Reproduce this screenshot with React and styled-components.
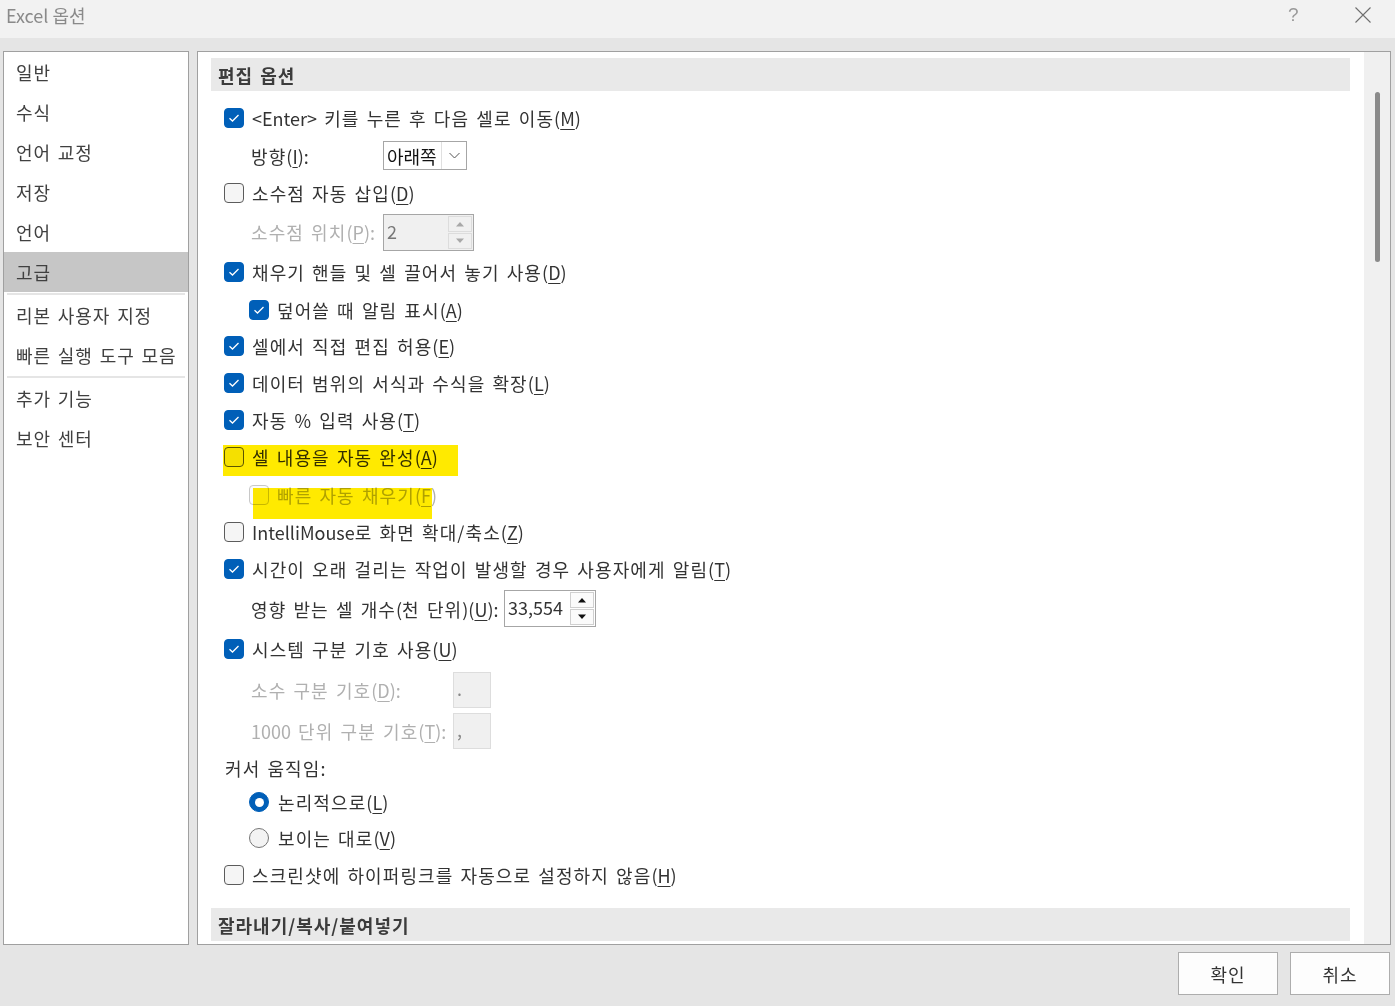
import React from "react";
import styled, { createGlobalStyle } from "styled-components";

const GlobalStyle = createGlobalStyle`
  html, body {
    margin: 0;
    padding: 0;
    background: #e5e5e5;
  }
  body {
    font-family: "Noto Sans CJK KR", "Noto Sans", sans-serif;
    color: #333;
  }
`;

const Window = styled.div`
  width: 1395px;
  height: 1006px;
  display: flex;
  flex-direction: column;
  position: relative;
  overflow: hidden;
`;

const TitleBar = styled.div`
  height: 38px;
  background: #f2f2f2;
  display: flex;
  align-items: center;
  padding: 0 0 0 6px;
  box-sizing: border-box;
`;

const Title = styled.div`
  font-size: 18px;
  color: #8a8a8a;
  flex: 1;
  margin-top: -8px;
`;

const Help = styled.div`
  width: 20px;
  font-family: "Liberation Sans", sans-serif;
  font-size: 19px;
  color: #9a9a9a;
  margin-right: 47px;
  margin-top: -8px;
`;

const Close = styled.div`
  width: 16px;
  height: 16px;
  margin-right: 24px;
  margin-top: -8px;
  display: flex;
`;

const Body = styled.div`
  flex: 1;
  display: flex;
  flex-direction: column;
  padding: 13px 4px 0 3px;
`;

const Main = styled.div`
  height: 894px;
  display: flex;
  gap: 8px;
`;

const NavPanel = styled.div`
  width: 186px;
  box-sizing: border-box;
  border: 1px solid #a0a0a0;
  background: #fff;
  display: flex;
  flex-direction: column;
`;

const NavItem = styled.div`
  height: 40px;
  display: flex;
  align-items: center;
  padding-left: 12px;
  font-size: 18px;
  letter-spacing: 0.9px;
  word-spacing: 2px;
  color: #404040;
  white-space: nowrap;
  background: ${(p) => (p.$active ? "#c6c6c6" : "transparent")};
`;

const NavDivider = styled.div`
  height: 2px;
  margin: 1px 3px 0;
  background: #e5e5e5;
`;

const ContentPanel = styled.div`
  flex: 1;
  box-sizing: border-box;
  border: 1px solid #a0a0a0;
  background: #fff;
  display: flex;
  overflow: hidden;
`;

const Content = styled.div`
  flex: 1;
  padding: 6px 14px 0 13px;
  overflow: hidden;
`;

const SectionHeader = styled.div`
  height: 33px;
  background: #e9e9e9;
  display: flex;
  align-items: center;
  padding-left: 7px;
  font-size: 18px;
  font-weight: 700;
  letter-spacing: 1px;
  word-spacing: 2px;
  color: #3c3c3c;
  margin-bottom: ${(p) => p.$mb || 0}px;
  margin-top: ${(p) => p.$mt || 0}px;
`;

const RowList = styled.div`
  padding-left: 13px;
  display: flex;
  flex-direction: column;
`;

const Scrollbar = styled.div`
  width: 26px;
  background: #f0f0f0;
  display: flex;
  justify-content: center;
  padding-top: 40px;
`;

const Thumb = styled.div`
  width: 5px;
  height: 170px;
  border-radius: 3px;
  background: #8a8a8a;
`;

const Row = styled.div`
  height: ${(p) => p.$h || 37}px;
  display: flex;
  align-items: center;
  padding-left: ${(p) => p.$indent || 0}px;
  font-size: 18px;
  letter-spacing: 1.1px;
  word-spacing: 2px;
  color: ${(p) => (p.$disabled ? "#b0b0b0" : "#333")};
  white-space: nowrap;
`;

const Box = styled.span`
  width: 20px;
  height: 20px;
  box-sizing: border-box;
  border-radius: 4px;
  margin-right: 8px;
  flex-shrink: 0;
  display: flex;
  align-items: center;
  justify-content: center;
  background: ${(p) => (p.$checked ? "#005fb8" : p.$disabled ? "#fbfbfb" : "#f5f5f5")};
  border: 1px solid
    ${(p) => (p.$checked ? "#005fb8" : p.$disabled ? "#c8c8c8" : "#5c5c5c")};
`;

const RadioDot = styled.span`
  width: 20px;
  height: 20px;
  box-sizing: border-box;
  border-radius: 50%;
  margin-right: 9px;
  flex-shrink: 0;
  display: flex;
  align-items: center;
  justify-content: center;
  background: ${(p) => (p.$checked ? "#005fb8" : "#f3f3f3")};
  border: 1px solid ${(p) => (p.$checked ? "#005fb8" : "#767676")};
  &::after {
    content: "";
    display: ${(p) => (p.$checked ? "block" : "none")};
    width: 9px;
    height: 9px;
    border-radius: 50%;
    background: #fff;
  }
`;

const Lat = styled.span`
  letter-spacing: 0;
`;

const MnWrap = styled.span`
  letter-spacing: 0;
  & u {
    text-decoration: underline;
    text-underline-offset: 3px;
    text-decoration-thickness: 1px;
  }
`;

function Mn({ k }) {
  return (
    <MnWrap>
      (<u>{k}</u>)
    </MnWrap>
  );
}

const Label = styled.span`
  display: inline-block;
  width: ${(p) => p.$w}px;
  color: ${(p) => (p.$disabled ? "#b0b0b0" : "#333")};
`;

const Select = styled.div`
  width: 84px;
  height: 29px;
  box-sizing: border-box;
  border: 1px solid #a6a6a6;
  display: flex;
  align-items: center;
  background: #fff;
  color: #111;
`;

const SelectText = styled.span`
  flex: 1;
  padding-left: 3px;
  letter-spacing: 0;
`;

const SelectArrow = styled.span`
  width: 24px;
  height: 100%;
  border-left: 1px solid #e0e0e0;
  display: flex;
  align-items: center;
  justify-content: center;
`;

const Spin = styled.div`
  width: ${(p) => p.$w}px;
  height: 37px;
  box-sizing: border-box;
  border: 1px solid #a6a6a6;
  background: ${(p) => (p.$disabled ? "#f0f0f0" : "#fff")};
  display: flex;
  color: ${(p) => (p.$disabled ? "#777" : "#333")};
`;

const SpinValue = styled.span`
  flex: 1;
  padding-left: 3px;
  line-height: 33px;
  letter-spacing: 0;
`;

const SpinButtons = styled.div`
  width: 24px;
  display: flex;
  flex-direction: column;
  gap: 1px;
  padding: 1px 1px 1px 0;
`;

const SpinBtn = styled.div`
  flex: 1;
  border: 1px solid ${(p) => (p.$disabled ? "#dcdcdc" : "#d0d0d0")};
  background: ${(p) => (p.$disabled ? "#f0f0f0" : "#fbfbfb")};
  display: flex;
  align-items: center;
  justify-content: center;
`;

const SmallField = styled.div`
  width: 38px;
  height: 36px;
  box-sizing: border-box;
  border: 1px solid #dddddd;
  background: #f0f0f0;
  color: #888;
  padding-left: 3px;
  line-height: 30px;
`;

const Footer = styled.div`
  display: flex;
  justify-content: flex-end;
  gap: 12px;
  padding: 7px 1px 0 0;
`;

const Button = styled.button`
  width: 100px;
  height: 43px;
  box-sizing: border-box;
  border: 1px solid #adadad;
  background: #fdfdfd;
  font-family: "Noto Sans CJK KR", sans-serif;
  font-size: 18px;
  letter-spacing: 1px;
  color: #333;
  padding: 0;
`;

const Highlight = styled.div`
  position: absolute;
  left: ${(p) => p.$x}px;
  top: ${(p) => p.$y}px;
  width: ${(p) => p.$w}px;
  height: ${(p) => p.$h}px;
  background: #ffea00;
  mix-blend-mode: multiply;
  pointer-events: none;
`;

const Grip = styled.div`
  position: absolute;
  right: 0;
  bottom: 0;
  width: 10px;
  height: 10px;
`;

function Check() {
  return (
    <svg width="12" height="10" viewBox="0 0 12 10">
      <path d="M1.5 5.2 L4.5 8 L10.5 2" fill="none" stroke="#fff" strokeWidth="1.3" />
    </svg>
  );
}

function CheckRow({ checked, disabled, indent, h, children }) {
  return (
    <Row $indent={indent} $h={h} $disabled={disabled}>
      <Box $checked={checked} $disabled={disabled}>
        {checked && <Check />}
      </Box>
      {children}
    </Row>
  );
}

function Tri({ up, color }) {
  return (
    <svg width="10" height="6" viewBox="0 0 10 6">
      <path d={up ? "M1 5.5 L5 1 L9 5.5 Z" : "M1 0.5 L5 5 L9 0.5 Z"} fill={color} />
    </svg>
  );
}

function Spinner({ value, width, disabled }) {
  const c = disabled ? "#a8a8a8" : "#111";
  return (
    <Spin $w={width} $disabled={disabled}>
      <SpinValue>{value}</SpinValue>
      <SpinButtons>
        <SpinBtn $disabled={disabled}>
          <Tri up color={c} />
        </SpinBtn>
        <SpinBtn $disabled={disabled}>
          <Tri color={c} />
        </SpinBtn>
      </SpinButtons>
    </Spin>
  );
}

const navTop = ["일반", "수식", "언어 교정", "저장", "언어"];

export default function App() {
  return (
    <Window>
      <GlobalStyle />
      <TitleBar>
        <Title>Excel 옵션</Title>
        <Help>?</Help>
        <Close>
          <svg width="16" height="16" viewBox="0 0 16 16">
            <path d="M0.5 0.5 L15.5 15.5 M15.5 0.5 L0.5 15.5" stroke="#6e6e6e" strokeWidth="1.1" />
          </svg>
        </Close>
      </TitleBar>
      <Body>
        <Main>
          <NavPanel>
            {navTop.map((n) => (
              <NavItem key={n}>{n}</NavItem>
            ))}
            <NavItem $active>고급</NavItem>
            <NavDivider />
            <NavItem>리본 사용자 지정</NavItem>
            <NavItem>빠른 실행 도구 모음</NavItem>
            <NavDivider />
            <NavItem>추가 기능</NavItem>
            <NavItem>보안 센터</NavItem>
          </NavPanel>
          <ContentPanel>
            <Content>
              <SectionHeader $mb={8}>편집 옵션</SectionHeader>
              <RowList>
                <CheckRow checked h={38}>
                  <Lat>&lt;Enter&gt;</Lat>&nbsp;키를 누른 후 다음 셀로 이동<Mn k="M" />
                </CheckRow>
                <Row $indent={27} $h={37}>
                  <Label $w={132}>
                    방향<Mn k="I" />:
                  </Label>
                  <Select>
                    <SelectText>아래쪽</SelectText>
                    <SelectArrow>
                      <svg width="11" height="7" viewBox="0 0 11 7">
                        <path d="M0.5 1 L5.5 6 L10.5 1" fill="none" stroke="#555" strokeWidth="1" />
                      </svg>
                    </SelectArrow>
                  </Select>
                </Row>
                <CheckRow h={38}>
                  소수점 자동 삽입<Mn k="D" />
                </CheckRow>
                <Row $indent={27} $h={40}>
                  <Label $w={132} $disabled>
                    소수점 위치<Mn k="P" />:
                  </Label>
                  <Spinner value="2" width={91} disabled />
                </Row>
                <CheckRow checked h={39}>
                  채우기 핸들 및 셀 끌어서 놓기 사용<Mn k="D" />
                </CheckRow>
                <CheckRow checked indent={25} h={37}>
                  덮어쓸 때 알림 표시<Mn k="A" />
                </CheckRow>
                <CheckRow checked h={36}>
                  셀에서 직접 편집 허용<Mn k="E" />
                </CheckRow>
                <CheckRow checked h={37}>
                  데이터 범위의 서식과 수식을 확장<Mn k="L" />
                </CheckRow>
                <CheckRow checked h={37}>
                  자동 % 입력 사용<Mn k="T" />
                </CheckRow>
                <CheckRow h={38}>
                  셀 내용을 자동 완성<Mn k="A" />
                </CheckRow>
                <CheckRow disabled indent={25} h={37}>
                  빠른 자동 채우기<Mn k="F" />
                </CheckRow>
                <CheckRow h={37}>
                  <Lat>IntelliMouse</Lat>로 화면 확대/축소<Mn k="Z" />
                </CheckRow>
                <CheckRow checked h={38}>
                  시간이 오래 걸리는 작업이 발생할 경우 사용자에게 알림<Mn k="T" />
                </CheckRow>
                <Row $indent={27} $h={41}>
                  <Label $w={253}>
                    영향 받는 셀 개수<Lat>(</Lat>천 단위<Lat>)</Lat>
                    <Mn k="U" />:
                  </Label>
                  <Spinner value="33,554" width={92} />
                </Row>
                <CheckRow checked h={40}>
                  시스템 구분 기호 사용<Mn k="U" />
                </CheckRow>
                <Row $indent={27} $h={42}>
                  <Label $w={202} $disabled>
                    소수 구분 기호<Mn k="D" />:
                  </Label>
                  <SmallField>.</SmallField>
                </Row>
                <Row $indent={27} $h={39}>
                  <Label $w={202} $disabled>
                    <Lat>1000</Lat> 단위 구분 기호<Mn k="T" />:
                  </Label>
                  <SmallField>,</SmallField>
                </Row>
                <Row $indent={1} $h={35}>
                  커서 움직임:
                </Row>
                <Row $indent={25} $h={34}>
                  <RadioDot $checked />
                  논리적으로<Mn k="L" />
                </Row>
                <Row $indent={25} $h={37}>
                  <RadioDot />
                  보이는 대로<Mn k="V" />
                </Row>
                <CheckRow h={38}>
                  스크린샷에 하이퍼링크를 자동으로 설정하지 않음<Mn k="H" />
                </CheckRow>
              </RowList>
              <SectionHeader $mt={14}>잘라내기/복사/붙여넣기</SectionHeader>
            </Content>
            <Scrollbar>
              <Thumb />
            </Scrollbar>
          </ContentPanel>
        </Main>
        <Footer>
          <Button>확인</Button>
          <Button>취소</Button>
        </Footer>
      </Body>
      <Highlight $x={223} $y={445} $w={235} $h={31} />
      <Highlight $x={253} $y={488} $w={179} $h={31} />
      <Grip>
        <svg width="10" height="10" viewBox="0 0 10 10">
          {[
            [8, 2],
            [5, 5],
            [8, 5],
            [2, 8],
            [5, 8],
            [8, 8],
          ].map(([x, y]) => (
            <rect key={`${x}-${y}`} x={x} y={y} width="2" height="2" fill="#b5b5b5" />
          ))}
        </svg>
      </Grip>
    </Window>
  );
}
